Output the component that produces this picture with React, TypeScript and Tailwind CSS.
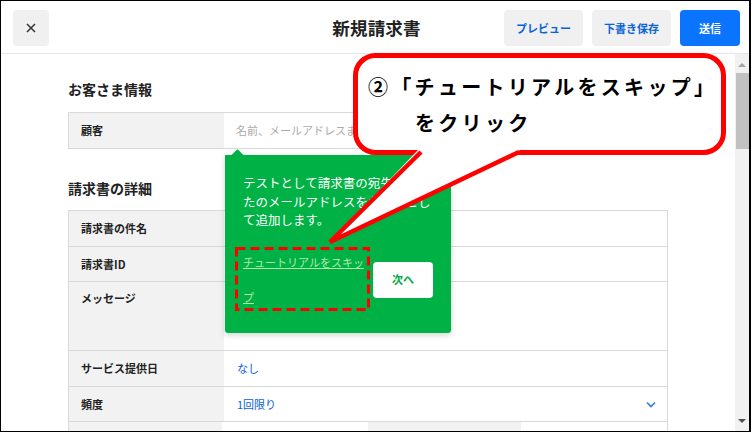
import React from 'react';

const jp = "font-['Noto_Sans_CJK_JP',sans-serif]";

const Row = ({ label, children, h, top = false }: { label: string; children?: React.ReactNode; h: string; top?: boolean }) => (
    <div className={`flex border-b border-[#d9d9d9] ${h}`}>
        <div className={`w-[155px] shrink-0 bg-[#f2f2f2] pl-[12px] flex text-[11px] font-bold text-[#222] ${top ? 'items-start pt-[8px]' : 'items-center'}`}>
            {label}
        </div>
        <div className="flex-1 flex items-center pl-[13px] pr-[11px] text-[11px] text-[#0a63d6]">
            {children}
        </div>
    </div>
);

const App = () => {
    return (
        <div className={`w-[751px] h-[432px] bg-white border-l border-t border-b border-r-2 border-black relative overflow-hidden flex flex-col ${jp}`}>
            {/* header */}
            <div className="h-[53px] shrink-0 border-b border-[#e6e6e6] grid grid-cols-[1fr_auto_1fr] items-center pl-[12px] pr-[9px] pt-[2px]">
                <div>
                    <button className="w-[36px] h-[36px] rounded-[4px] bg-[#f0f0f0] flex items-center justify-center text-[#333]">
                        <svg width="10" height="10" viewBox="0 0 10 10"><path d="M1 1L9 9M9 1L1 9" stroke="#333" strokeWidth="1.5" /></svg>
                    </button>
                </div>
                <div className="text-[17.5px] font-bold text-[#222] tracking-[0.2px]">新規請求書</div>
                <div className="flex justify-end gap-[9px]">
                    <button className="w-[79px] h-[36px] rounded-[4px] bg-[#f0f0f0] text-[11px] font-bold text-[#0a63d6]">プレビュー</button>
                    <button className="w-[79px] h-[36px] rounded-[4px] bg-[#f0f0f0] text-[11px] font-bold text-[#0a63d6]">下書き保存</button>
                    <button className="w-[60px] h-[36px] rounded-[4px] bg-[#0a74ff] text-[11px] font-bold text-white">送信</button>
                </div>
            </div>

            {/* body */}
            <div className="flex-1 flex min-h-0">
                <div className="flex-1 overflow-hidden">
                    <div className="w-[600px] mx-auto pt-[25px]">
                        <h2 className="text-[14px] leading-[20px] font-bold text-[#222]">お客さま情報</h2>
                        <div className="mt-[13px] border border-[#d9d9d9] flex h-[37px]">
                            <div className="w-[155px] bg-[#f2f2f2] pl-[12px] flex items-center text-[11px] font-bold text-[#222]">顧客</div>
                            <div className="flex-1 flex items-center pl-[12px] text-[11px] text-[#aaa]">名前、メールアドレスまたは電話番号</div>
                        </div>

                        <h2 className="mt-[29px] text-[14px] leading-[20px] font-bold text-[#222]">請求書の詳細</h2>
                        <div className="mt-[12px] border-t border-l border-r border-[#d9d9d9]">
                            <Row label="請求書の件名" h="h-[36px]" />
                            <Row label="請求書ID" h="h-[35px]" />
                            <Row label="メッセージ" h="h-[69px]" top />
                            <Row label="サービス提供日" h="h-[36px]">なし</Row>
                            <Row label="頻度" h="h-[35px]">
                                <span className="flex-1">1回限り</span>
                                <svg width="10" height="7" viewBox="0 0 10 7"><path d="M1 1.5L5 5.5L9 1.5" stroke="#2f7de0" strokeWidth="1.6" fill="none" /></svg>
                            </Row>
                            <div className="flex h-[40px]">
                                <div className="w-[153px] bg-[#f2f2f2]"></div>
                                <div className="w-[146px]"></div>
                                <div className="w-[153px] bg-[#f2f2f2]"></div>
                                <div className="flex-1"></div>
                            </div>
                        </div>
                    </div>
                </div>

                {/* scrollbar */}
                <div className="w-[14px] shrink-0 bg-[#f1f1f1] flex flex-col items-center">
                    <div className="h-[19px] flex items-center justify-center pt-[2px]">
                        <div className="w-0 h-0 border-l-[4px] border-r-[4px] border-b-[4px] border-l-transparent border-r-transparent border-b-[#a3a3a3]"></div>
                    </div>
                    <div className="w-[13px] h-[76px] bg-[#c1c1c1]"></div>
                    <div className="flex-1"></div>
                    <div className="h-[17px] flex items-start justify-center pt-[5px]">
                        <div className="w-0 h-0 border-l-[4px] border-r-[4px] border-t-[4px] border-l-transparent border-r-transparent border-t-[#505050]"></div>
                    </div>
                </div>
            </div>

            {/* tutorial popover */}
            <div className="absolute left-[224px] top-[154px] w-[226px] bg-[#00b245] rounded-b-[3px] shadow-[0_2px_6px_rgba(0,0,0,0.18)] pl-[18px] pr-[18px] pt-[19px] pb-[18px]">
                <div className="absolute left-[8px] -top-[4px] w-[9px] h-[9px] bg-[#00b245] rotate-45 rounded-[1px]"></div>
                <p className="text-[12.5px] leading-[18.5px] text-white">テストとして請求書の宛先にあなたのメールアドレスをお客様として追加します。</p>
                <div className="mt-[15px] h-[70px] flex items-center gap-[6px]">
                    <a className="flex-1 text-[11px] leading-[35px] text-[#b2eaa8] underline">チュートリアルをスキップ</a>
                    <button className="w-[60px] h-[36px] rounded-[4px] bg-white text-[11px] font-bold text-[#00a83f]">次へ</button>
                </div>
            </div>

            {/* annotations */}
            <svg className="absolute -left-px -top-px" width="751" height="432" viewBox="0 0 751 432">
                <rect x="355.5" y="55.5" width="368" height="97" rx="20" fill="white" stroke="#ff0000" strokeWidth="5" />
                <polygon points="418,150 330,242 520,150" fill="white" />
                <polyline points="421,152 330,242 519,152" fill="none" stroke="#ff0000" strokeWidth="4.5" strokeLinejoin="miter" />
                <rect x="236.5" y="248.5" width="132" height="61" fill="none" stroke="#ff0000" strokeWidth="3" strokeDasharray="9 5" />
            </svg>
            <div className="absolute left-[367px] top-[68px] text-[20px] leading-[36px] font-bold text-black tracking-[3.3px]">
                <div>②「チュートリアルをスキップ」</div>
                <div className="pl-[47px]">をクリック</div>
            </div>
        </div>
    );
};

export default App;
